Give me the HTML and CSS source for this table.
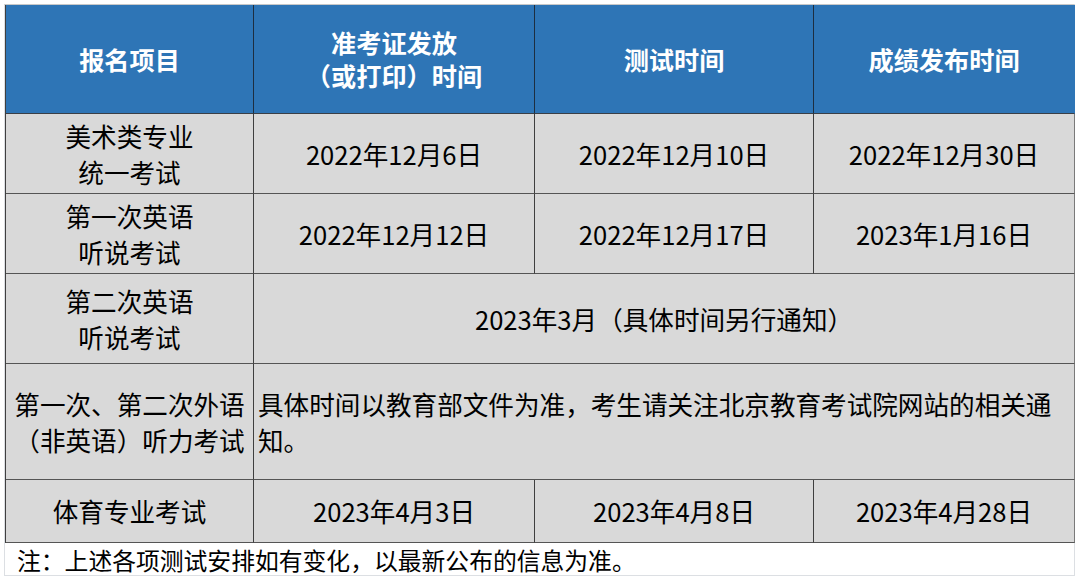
FILE: index.html
```html
<!DOCTYPE html>
<html lang="zh-CN">
<head>
<meta charset="utf-8">
<link rel="stylesheet" href="styles.css">
</head>
<body>
<div class="frame">
  <div class="grid">
    <div class="cell head">报名项目</div>
    <div class="cell head">准考证发放<br>（或打印）时间</div>
    <div class="cell head">测试时间</div>
    <div class="cell head last">成绩发布时间</div>

    <div class="cell name">美术类专业<br>统一考试</div>
    <div class="cell">2022年12月6日</div>
    <div class="cell">2022年12月10日</div>
    <div class="cell last">2022年12月30日</div>

    <div class="cell name">第一次英语<br>听说考试</div>
    <div class="cell">2022年12月12日</div>
    <div class="cell">2022年12月17日</div>
    <div class="cell last">2023年1月16日</div>

    <div class="cell name">第二次英语<br>听说考试</div>
    <div class="cell span3 last">2023年3月（具体时间另行通知）</div>

    <div class="cell name">第一次、第二次外语<br>（非英语）听力考试</div>
    <div class="cell span3 last left">具体时间以教育部文件为准，考生请关注北京教育考试院网站的相关通知。</div>

    <div class="cell name">体育专业考试</div>
    <div class="cell">2023年4月3日</div>
    <div class="cell">2023年4月8日</div>
    <div class="cell last">2023年4月28日</div>
  </div>
  <div class="note">注：上述各项测试安排如有变化，以最新公布的信息为准。</div>
</div>
</body>
</html>
```

FILE: styles.css
```css
html, body {
  margin: 0;
  padding: 0;
  background: #ffffff;
}

body {
  font-family: "Noto Sans CJK SC", "Noto Sans", sans-serif;
  color: #000000;
}

.frame {
  margin: 4px 0 0 4px;
  width: 1071px;
  height: 572px;
  border: 1px solid #dcdfe3;
  border-top-color: #c8c8c8;
  box-sizing: border-box;
}

.grid {
  display: grid;
  grid-template-columns: 248px 281px 279px 261px;
  grid-template-rows: 109px 80px 80px 90px 116px 63px;
  background: #d9d9d9;
  border-left: 1px solid #3f3f3f;
  box-sizing: border-box;
}

.cell {
  display: flex;
  align-items: center;
  justify-content: center;
  text-align: center;
  font-size: 25.6px;
  line-height: 36px;
  border-right: 1px solid #3f3f3f;
  border-bottom: 1px solid #555555;
  box-sizing: border-box;
  white-space: nowrap;
}

.cell.last {
  border-right-color: #7a7a7a;
}

.head {
  background: #2e75b6;
  color: #ffffff;
  font-weight: 700;
  font-size: 25.2px;
  line-height: 33px;
  border-right-color: #1d2e40;
  border-bottom-color: #3a3f46;
}

.head.last {
  border-right-color: #2e75b6;
}

.span3 {
  grid-column: span 3;
}

.left {
  justify-content: flex-start;
  text-align: left;
  white-space: normal;
  padding-left: 4px;
  padding-right: 14px;
}

.note {
  height: 33px;
  font-size: 23.8px;
  line-height: 33px;
  padding-left: 12px;
  white-space: nowrap;
}
```
